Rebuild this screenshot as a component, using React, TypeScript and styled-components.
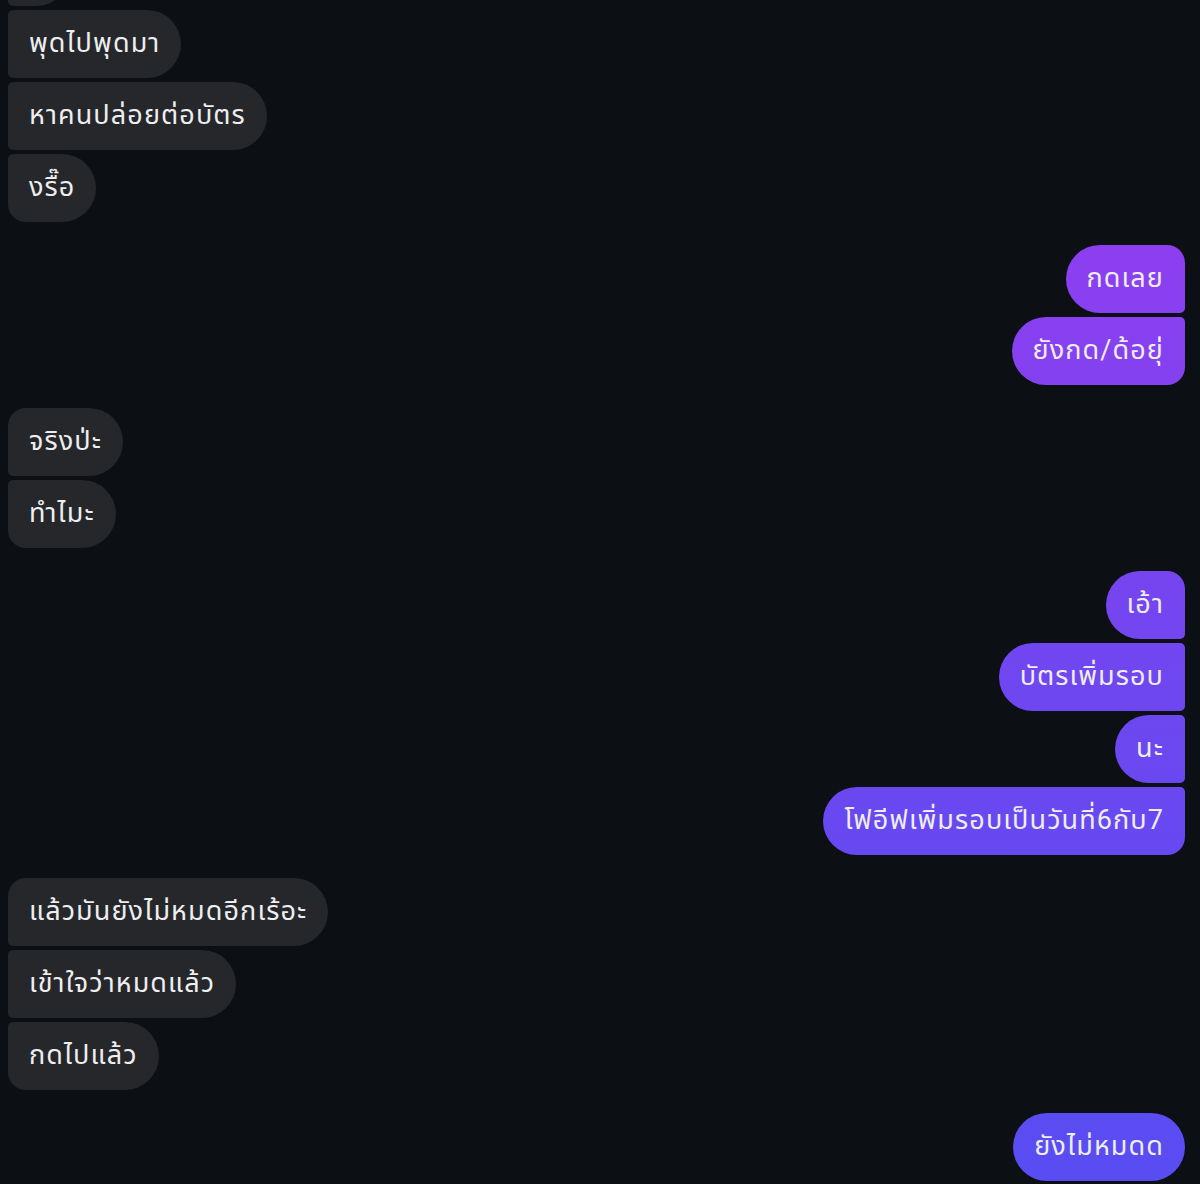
import React from "react";
import styled, { createGlobalStyle, css } from "styled-components";

const GlobalStyle = createGlobalStyle`
  html, body {
    margin: 0;
    padding: 0;
    background: #0c0f14;
  }
  body {
    font-family: Roboto, "Noto Sans Thai", "Noto Sans", sans-serif;
    overflow: hidden;
  }
`;

type Side = "in" | "out";
type Pos = "single" | "first" | "middle" | "last";

interface Group {
  side: Side;
  messages: string[];
}

const groups: Group[] = [
  { side: "in", messages: ["", "พุดไปพุดมา", "หาคนปล่อยต่อบัตร", "งรื๊อ"] },
  { side: "out", messages: ["กดเลย", "ยังกด/ด้อยุ่"] },
  { side: "in", messages: ["จริงป่ะ", "ทำไมะ"] },
  { side: "out", messages: ["เอ้า", "บัตรเพิ่มรอบ", "นะ", "โฟอีฟเพิ่มรอบเป็นวันที่6กับ7"] },
  { side: "in", messages: ["แล้วมันยังไม่หมดอีกเร้อะ", "เข้าใจว่าหมดแล้ว", "กดไปแล้ว"] },
  { side: "out", messages: ["ยังไม่หมดด"] },
];

const Page = styled.main`
  display: flex;
  flex-direction: column;
  gap: 23px;
  padding: 0 15px 0 8px;
  margin-top: -62px;
  min-height: 100vh;
`;

const GroupBox = styled.section<{ $side: Side }>`
  display: flex;
  flex-direction: column;
  gap: 4px;
  align-items: ${(p) => (p.$side === "out" ? "flex-end" : "flex-start")};
`;

const BIG = 34;
const MID = 18;
const SMALL = 5;

function radii(side: Side, pos: Pos) {
  const top = pos === "single" ? BIG : pos === "first" ? MID : SMALL;
  const bottom = pos === "single" ? BIG : pos === "last" ? MID : SMALL;
  if (side === "in") {
    return css`
      border-radius: ${top}px ${BIG}px ${BIG}px ${bottom}px;
    `;
  }
  return css`
    border-radius: ${BIG}px ${top}px ${bottom}px ${BIG}px;
  `;
}

const Bubble = styled.div<{ $side: Side; $pos: Pos }>`
  box-sizing: border-box;
  height: 68px;
  min-width: 62px;
  display: flex;
  align-items: center;
  padding: 0 21px 2px;
  font-size: 27px;
  letter-spacing: 1.1px;
  line-height: 1;
  color: #eeeef0;
  white-space: nowrap;
  ${(p) =>
    p.$side === "in"
      ? css`
          background: #25272b;
        `
      : css`
          background: linear-gradient(180deg, #a13bef 0%, #8c3ff0 22%, #6d47f0 60%, #584df2 100%);
          background-attachment: fixed;
        `}
  ${(p) => radii(p.$side, p.$pos)}
`;

function posOf(i: number, n: number): Pos {
  if (n === 1) return "single";
  if (i === 0) return "first";
  if (i === n - 1) return "last";
  return "middle";
}

export default function App() {
  return (
    <>
      <GlobalStyle />
      <Page>
        {groups.map((g, gi) => (
          <GroupBox key={gi} $side={g.side}>
            {g.messages.map((m, i) => (
              <Bubble key={i} $side={g.side} $pos={posOf(i, g.messages.length)} aria-hidden={m === "" ? true : undefined}>
                {m}
              </Bubble>
            ))}
          </GroupBox>
        ))}
      </Page>
    </>
  );
}
